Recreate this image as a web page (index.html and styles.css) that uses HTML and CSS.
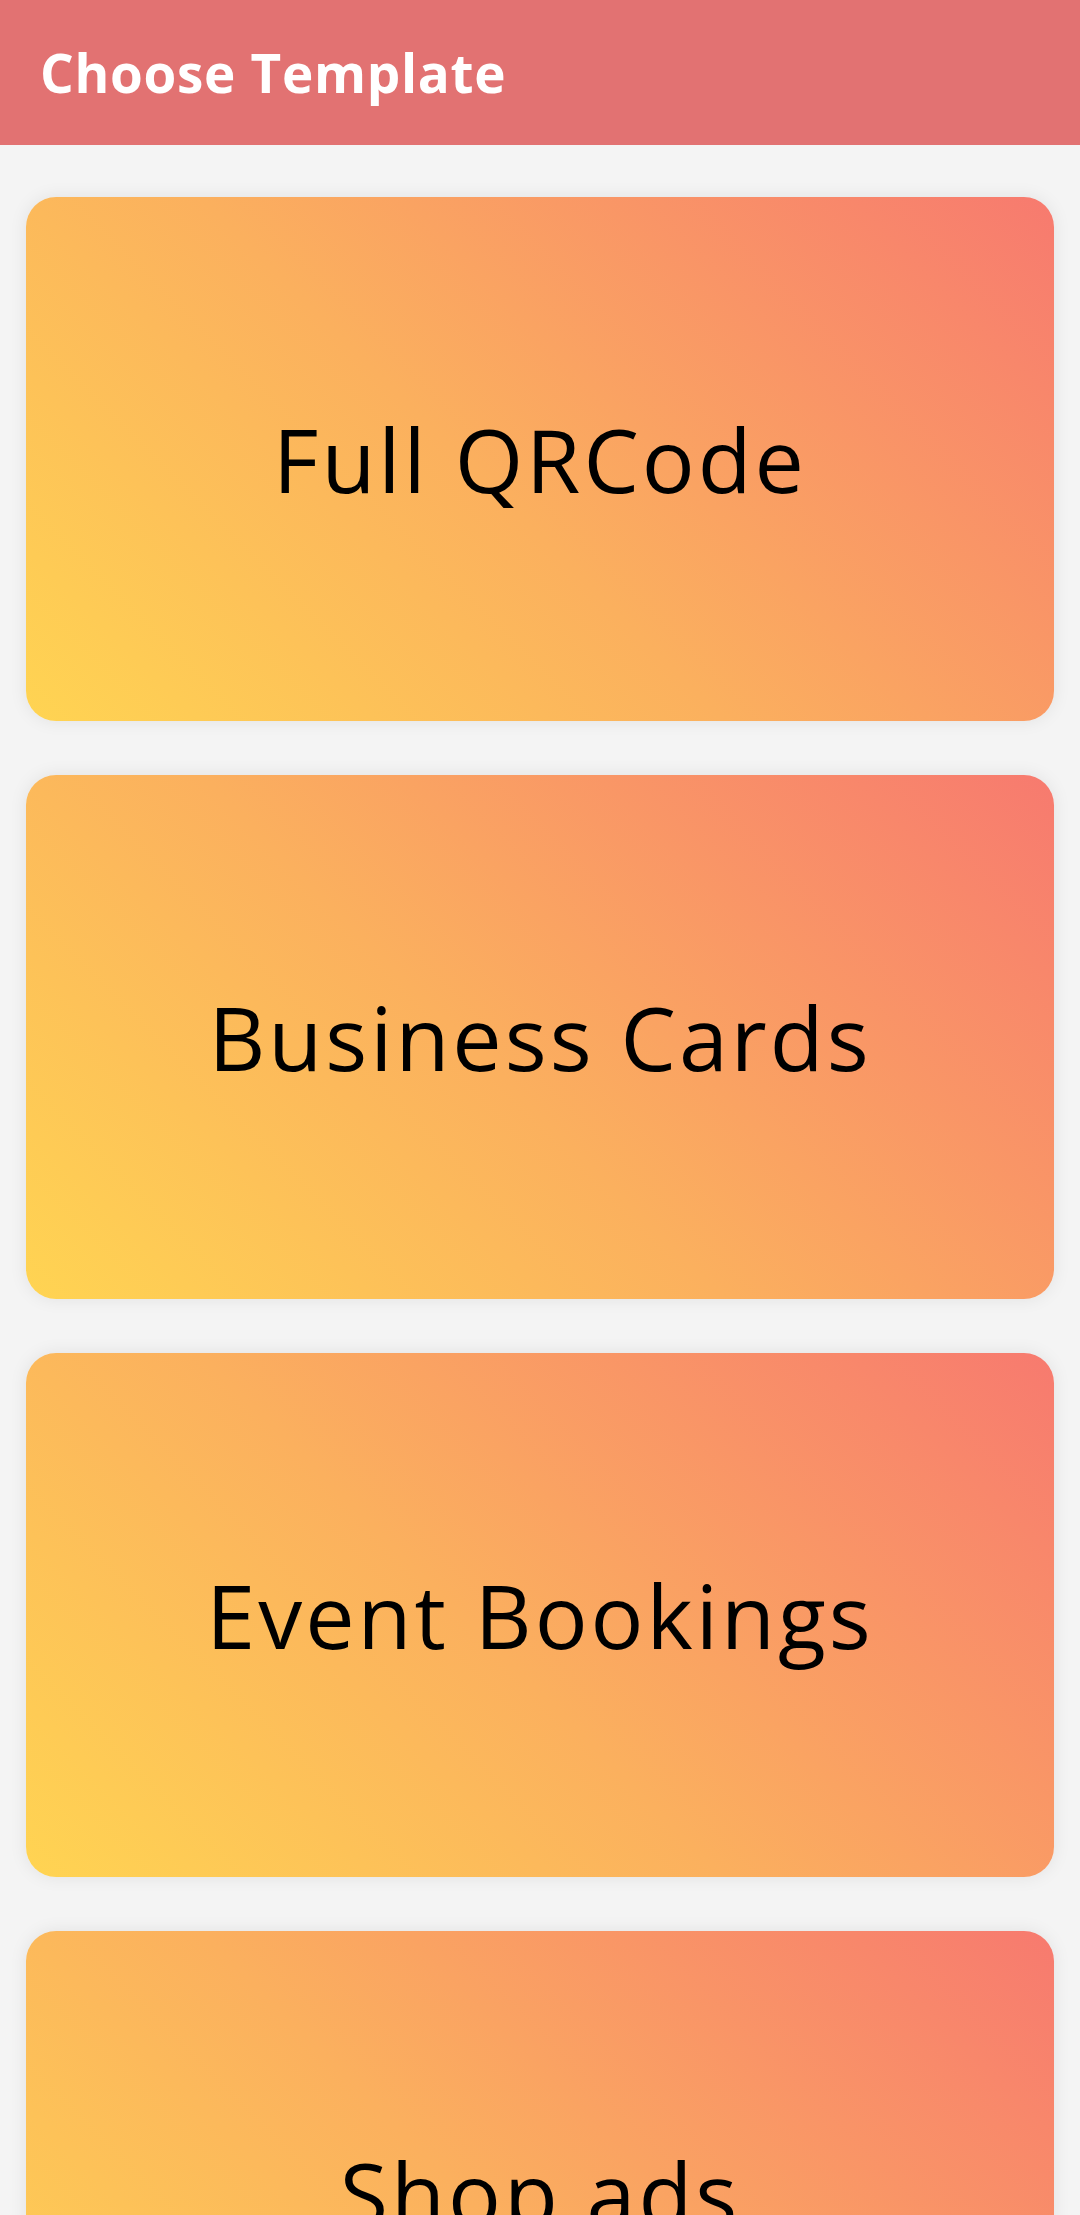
FILE: index.html
```html
<!DOCTYPE html>
<html lang="en">
<head>
<meta charset="utf-8">
<title>Choose Template</title>
<link rel="stylesheet" href="styles.css">
</head>
<body>
<header class="app-bar">
  <h1 class="app-title">Choose Template</h1>
</header>
<main class="template-list">
  <div class="template-card"><span class="template-name">Full QRCode</span></div>
  <div class="template-card"><span class="template-name">Business Cards</span></div>
  <div class="template-card"><span class="template-name">Event Bookings</span></div>
  <div class="template-card"><span class="template-name">Shop ads</span></div>
</main>
</body>
</html>
```

FILE: styles.css
```css
html, body {
  margin: 0;
  padding: 0;
}
body {
  background: #f4f4f4;
  font-family: "Open Sans", "Noto Sans", sans-serif;
  width: 1080px;
  height: 2215px;
  overflow: hidden;
}
.app-bar {
  height: 145px;
  background: #e27272;
  display: flex;
  align-items: center;
  padding-left: 40px;
  box-sizing: border-box;
}
.app-title {
  margin: 0;
  color: #ffffff;
  font-size: 53px;
  font-weight: 700;
  letter-spacing: 0.7px;
  line-height: 1;
}
.template-list {
  display: flex;
  flex-direction: column;
  gap: 54px;
  padding: 52px 26px;
}
.template-card {
  height: 524px;
  border-radius: 30px;
  background: linear-gradient(45deg, #ffd452 0%, #fbb05e 45%, #f77a6f 100%);
  box-shadow: 0 0 18px rgba(0, 0, 0, 0.08);
  display: flex;
  align-items: center;
  justify-content: center;
}
.template-name {
  color: #000000;
  font-size: 88px;
  font-weight: 500;
  letter-spacing: 3px;
  line-height: 1;
}
```
